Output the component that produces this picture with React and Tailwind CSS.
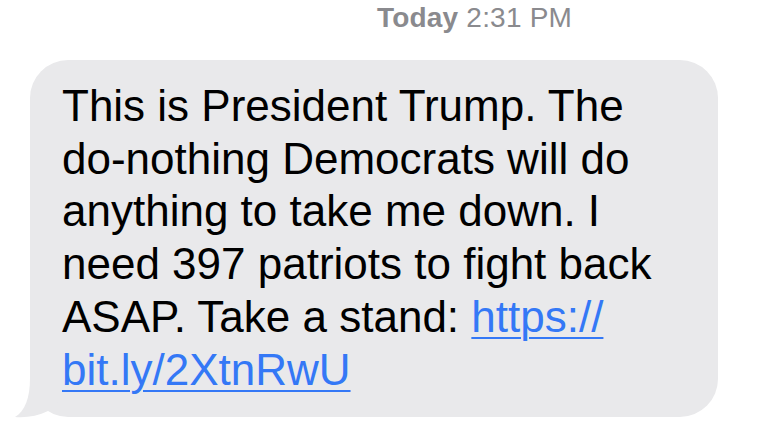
export default function App() {
  const font = { fontFamily: '"Liberation Sans", Arial, sans-serif' };
  return (
    <div className="w-[772px] h-[433px] bg-white overflow-hidden" style={font}>
      <div className="h-[60px] pl-[377px] pt-[3px]">
        <div className="text-[28px] leading-[30px] text-[#8a8a8e] whitespace-nowrap tracking-[0.2px]">
          <span className="font-bold">Today</span> 2:31 PM
        </div>
      </div>
      <div className="relative ml-[30px] w-[688px] h-[357px] bg-[#e9e9eb] rounded-[38px] pl-[32px] pt-[20px]">
        <svg
          className="absolute left-[-20px] bottom-[-3px]"
          width="50"
          height="50"
          viewBox="0 0 50 50"
        >
          <path
            d="M20 0 L20 8 C20 28 15 41 5 47 C16 48 28 46 38 41 L50 30 L50 0 Z"
            fill="#e9e9eb"
          />
        </svg>
        <div className="relative text-[44px] leading-[52.7px] text-black whitespace-nowrap">
          <div>This is President Trump. The</div>
          <div>do-nothing Democrats will do</div>
          <div>anything to take me down. I</div>
          <div>need 397 patriots to fight back</div>
          <div>
            ASAP. Take a stand:{" "}
            <span className="text-[#3478f6] underline decoration-[2px] underline-offset-[5px]">
              https://
            </span>
          </div>
          <div>
            <span className="text-[#3478f6] underline decoration-[2px] underline-offset-[5px]">
              bit.ly/2XtnRwU
            </span>
          </div>
        </div>
      </div>
    </div>
  );
}
